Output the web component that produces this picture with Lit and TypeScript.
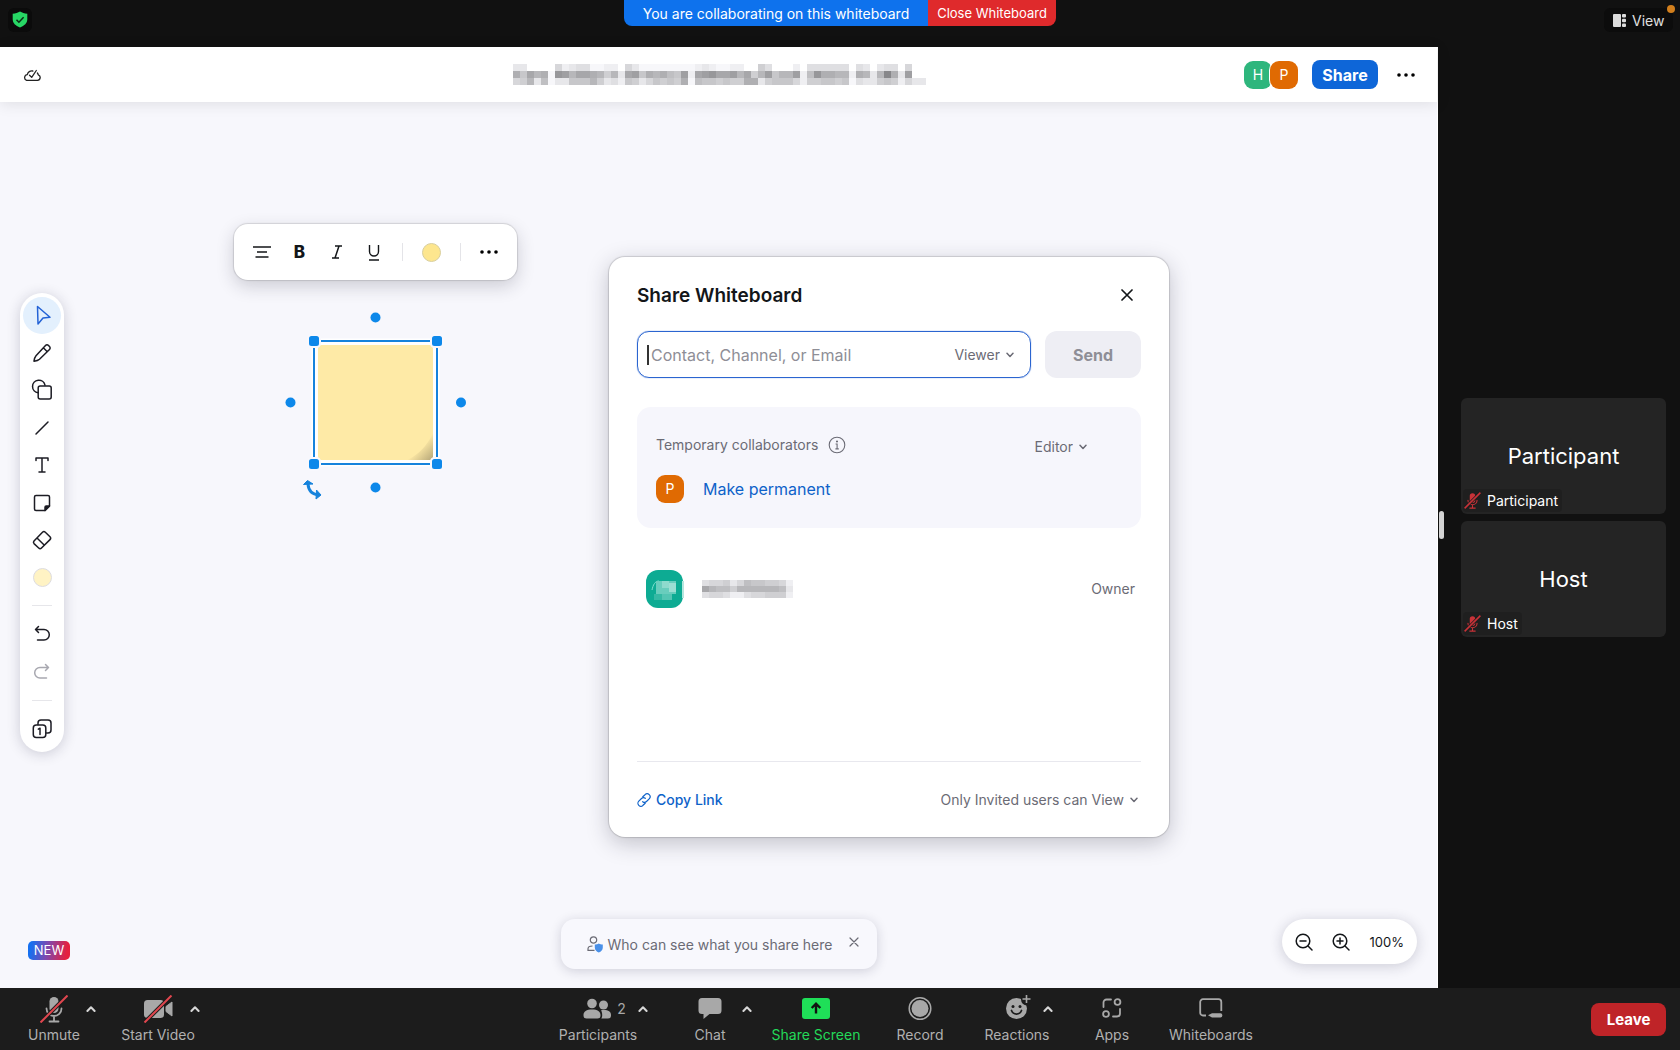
import { LitElement, html, css, svg } from "lit";
import { customElement } from "lit/decorators.js";

const chevronDown = html`<svg class="chev" width="8" height="6" viewBox="0 0 8 6" aria-hidden="true"><path d="M1 1.2 4 4.4 7 1.2" fill="none" stroke="currentColor" stroke-width="1.5" stroke-linecap="round" stroke-linejoin="round"/></svg>`;

const chevronUp = html`<svg width="10" height="8" viewBox="0 0 10 8" aria-hidden="true"><path d="M1.4 6 5 2.2 8.6 6" fill="none" stroke="#d6d6d6" stroke-width="2" stroke-linecap="round" stroke-linejoin="round"/></svg>`;

const dots = html`<svg width="20" height="6" viewBox="0 0 20 6" aria-hidden="true"><circle cx="3" cy="3" r="1.8"/><circle cx="10" cy="3" r="1.8"/><circle cx="17" cy="3" r="1.8"/></svg>`;

const strokeIcon = (body: unknown) => html`<svg width="22" height="22" viewBox="0 0 22 22" fill="none" stroke="currentColor" stroke-width="1.5" stroke-linecap="round" stroke-linejoin="round" aria-hidden="true">${body}</svg>`;

/* Pixelated redaction: one hex digit per cell, 0 = white, f = darkest. */
const mosaic = (rows: string[], w: number, h: number) => html`<svg class="mosaic" width=${rows[0].length * w} height=${rows.length * h} shape-rendering="crispEdges" aria-hidden="true">
  ${rows.map((row, y) => [...row].map((d, x) => {
    const level = parseInt(d, 16);
    const c = 255 - level * 8;
    return level ? svg`<rect x=${x * w} y=${y * h} width=${w} height=${h} fill=${`rgb(${c},${c},${Math.min(255, c + 3)})`}/>` : null;
  }))}
</svg>`;

const TITLE = [
  "33000052344112205311111111232112200640002044444404303440500",
  "a7b9a1dc9bba9693bc7a9a87c2bcdbbc9b69c799c28daa992a939fa3c00",
  "5693813377796342" + "76357676a1" + "8776766aa3677752667767143367625" + "33",
];
const NAME = ["4556358776652", "b988699999983", "4554224556662"];

const TOOLS = [
  { name: "Pen", icon: svg`<path d="M3 19.2c.3-2.300 .8-4.200 2-5.500L14.500 3.500a2.100 2.100 0 0 1 3 0l1 1a2.100 2.100 0 0 1 0 3L8.500 17.200c-1.300 1.200-3.200 1.700-5.500 2ZM12.300 5.800l4 4"/>` },
  { name: "Shapes", icon: svg`<path d="M7.200 13.800A6.300 6.300 0 1 1 14 6.200"/><rect x="7.200" y="7" width="13" height="13" rx="2"/>` },
  { name: "Line", icon: svg`<path d="M5 17 17 5"/>` },
  { name: "Text", icon: svg`<path d="M5 6.500V4h12v2.500M11 4v14M8 18h6"/>` },
  { name: "Sticky note", icon: svg`<path d="M3.500 5A1.500 1.500 0 0 1 5 3.500h12A1.500 1.500 0 0 1 18.500 5v9L14 18.500H5A1.500 1.500 0 0 1 3.500 17Z"/><path d="M14 18.500V15.200A1.200 1.200 0 0 1 15.200 14H18.500Z" fill="currentColor"/>` },
  { name: "Eraser", icon: svg`<path d="M3 12 11.500 3.200a2 2 0 0 1 2.800 0l4.700 4.600a2 2 0 0 1 0 2.800L10.500 19a2 2 0 0 1-2.800 0L3 14.600a2 2 0 0 1 0-2.600ZM6 9l7.400 7.200"/>` },
];

const slash = (x1: number, y1: number, x2: number, y2: number) => svg`<path d="M${x1} ${y1}L${x2} ${y2}" stroke="#1c1c1c" stroke-width="4"/><path d="M${x1} ${y1}L${x2} ${y2}" stroke="#e0464f" stroke-width="2"/>`;

const micBody = svg`<rect x="9.500" y="2" width="9" height="16" rx="4.500" fill="currentColor"/><path d="M6.500 13.500a7.500 7.500 0 0 0 15 0M14 21v4.500M9.500 26.500h9" fill="none" stroke="currentColor" stroke-width="1.800" stroke-linecap="round"/>`;

const ICONS: Record<string, unknown> = {
  mic: html`<svg width="28" height="28" viewBox="0 0 28 28" aria-hidden="true">${micBody}${slash(0.5, 27.5, 27.5, 0.5)}</svg>`,
  video: html`<svg width="30" height="28" viewBox="0 0 30 28" aria-hidden="true"><rect x="1" y="5" width="20" height="18" rx="3.500" fill="currentColor"/><path d="M23 11.500 29 7v14l-6-4.500Z" fill="currentColor" stroke="currentColor" stroke-linejoin="round"/>${slash(1.5, 27.5, 28.5, 0.5)}</svg>`,
  people: html`<svg width="28" height="28" viewBox="0 0 28 28" fill="currentColor" aria-hidden="true"><circle cx="9" cy="8.500" r="4.800"/><path d="M.5 20C.5 16.500 3.500 14.500 9 14.500s8.500 2 8.500 5.500V20.500A3 3 0 0 1 14.500 23.500h-11A3 3 0 0 1 .5 20.500Z"/><circle cx="20.500" cy="10" r="4.500"/><path d="M18 15.300c1-.3 1.800-.3 2.600-.3 5 0 7.400 1.800 7.400 5V20.500a3 3 0 0 1-3 3h-6.700c.6-.8.9-1.900.9-3v-.6c0-1.800-.4-3.200-1.200-4.600Z"/></svg>`,
  chat: html`<svg width="24" height="28" viewBox="0 0 24 28" aria-hidden="true"><path d="M4 3h16a3.500 3.500 0 0 1 3.500 3.500v9A3.500 3.500 0 0 1 20 19h-8.500L5.500 24v-5H4A3.500 3.500 0 0 1 .5 15.500v-9A3.500 3.500 0 0 1 4 3Z" fill="currentColor"/></svg>`,
  screen: html`<svg width="28" height="28" viewBox="0 0 28 28" aria-hidden="true"><rect y="3" width="28" height="21" rx="3" fill="#1fdf58"/><path d="M14 18.500v-9M9.700 13 14 8.700l4.300 4.300" fill="none" stroke="#111" stroke-width="2.400"/></svg>`,
  record: html`<svg width="24" height="28" viewBox="0 0 24 28" aria-hidden="true"><circle cx="12" cy="13.500" r="10.800" fill="none" stroke="currentColor" stroke-width="1.500"/><circle cx="12" cy="13.500" r="8.500" fill="currentColor"/></svg>`,
  smile: html`<svg width="28" height="28" viewBox="0 0 28 28" aria-hidden="true"><circle cx="13.500" cy="13.500" r="10.500" fill="currentColor"/><circle cx="24" cy="4.500" r="6" fill="#1c1c1c"/><path d="M23.500 0v8M19.500 4h8" stroke="currentColor" stroke-width="1.600"/><circle cx="10" cy="11.500" r="1.500" fill="#1c1c1c"/><circle cx="17" cy="11.500" r="1.500" fill="#1c1c1c"/><path d="M8.500 15.500a5.300 5.300 0 0 0 10 0" fill="none" stroke="#1c1c1c" stroke-width="1.700" stroke-linecap="round"/></svg>`,
  apps: html`<svg width="22" height="28" viewBox="0 0 22 28" fill="none" stroke="currentColor" stroke-width="1.800" stroke-linecap="round" aria-hidden="true"><path d="M2.500 12V7.500A3 3 0 0 1 5.500 4.500H10M19 14v4.500a3 3 0 0 1-3 3h-4"/><circle cx="16.500" cy="7" r="2.900"/><circle cx="5" cy="19" r="2.900"/></svg>`,
  board: html`<svg width="24" height="28" viewBox="0 0 24 28" fill="none" stroke="currentColor" stroke-width="1.800" aria-hidden="true"><path d="M7 20.500H4A2.800 2.800 0 0 1 1.200 17.700V7A2.800 2.800 0 0 1 4 4.200H19.500A2.800 2.800 0 0 1 22.300 7v9"/><path d="M9 20.300l4-2h8.500a1.800 1.800 0 0 1 1.800 1.800v.6a1.800 1.800 0 0 1-1.800 1.800H13Z" fill="currentColor" stroke="none"/></svg>`,
};

interface Control { icon: string; label: string; caret?: boolean; count?: number; cls?: string; }

const LEFT_CONTROLS: Control[] = [
  { icon: "mic", label: "Unmute", caret: true },
  { icon: "video", label: "Start Video", caret: true },
];
const CENTER_CONTROLS: Control[] = [
  { icon: "people", label: "Participants", caret: true, count: 2, cls: "wide" },
  { icon: "chat", label: "Chat", caret: true },
  { icon: "screen", label: "Share Screen", cls: "wide green" },
  { icon: "record", label: "Record" },
  { icon: "smile", label: "Reactions", caret: true, cls: "narrow" },
  { icon: "apps", label: "Apps" },
  { icon: "board", label: "Whiteboards", cls: "wide" },
];

const FONT = css`
  * { box-sizing: border-box; }
  button, input, select { font: inherit; color: inherit; background: none; border: 0; padding: 0; margin: 0; }
  button, select { cursor: pointer; }
  svg { display: block; flex: none; }
`;

@customElement("meeting-controls")
export class MeetingControls extends LitElement {
  static styles = [FONT, css`
    :host { display: flex; justify-content: space-between; background: #1c1c1c; color: #b0b0b0; padding: 7px 14px 0 16px; height: 62px; }
    .left { display: grid; grid-template-columns: 104px 98px; }
    .center { display: grid; grid-template-columns: 120px 100px 110px 103px 89px 91px auto; }
    .control { display: flex; align-items: flex-start; }
    .main { display: flex; flex-direction: column; align-items: center; gap: 2px; width: 76px; font-size: 14px; line-height: 20px; white-space: nowrap; }
    .wide .main { width: 92px; }
    .narrow .main { width: 64px; }
    .green .main { color: #23d959; width: 88px; }
    .icon { display: flex; align-items: center; gap: 6px; color: #a8a8a8; }
    .counted { padding-left: 13px; }
    .caret { display: grid; place-items: center; width: 16px; height: 28px; margin-left: -9px; }
    .leave { align-self: flex-start; margin-top: 8px; width: 75px; height: 33px; border-radius: 8px; background: #bf2428; color: #fff; font-weight: 700; font-size: 15px; }
  `];

  private control(c: Control) {
    return html`<div class="control ${c.cls ?? ""}">
      <button class="main"><span class="icon ${c.count ? "counted" : ""}">${ICONS[c.icon]}${c.count ?? ""}</span><span>${c.label}</span></button>
      ${c.caret ? html`<button class="caret" aria-label="${c.label} options">${chevronUp}</button>` : null}
    </div>`;
  }

  render() {
    return html`
      <div class="left">${LEFT_CONTROLS.map((c) => this.control(c))}</div>
      <div class="center">${CENTER_CONTROLS.map((c) => this.control(c))}</div>
      <button class="leave">Leave</button>`;
  }
}

@customElement("share-dialog")
export class ShareDialog extends LitElement {
  static styles = [FONT, css`
    :host { display: flex; flex-direction: column; width: 560px; height: 580px; padding: 28px; background: #fff; border-radius: 16px; box-shadow: 0 0 1px 1px rgba(0,0,0,.14), 0 6px 22px rgba(30,30,50,.25); color: #6b6b75; font-size: 14px; line-height: 20px; }
    .head { display: flex; justify-content: space-between; align-items: center; height: 22px; }
    h2 { margin: 0; font-size: 19px; line-height: 22px; color: #131619; font-weight: 600; }
    .close { color: #131619; padding: 0 8px 3px; }
    .invite { display: flex; gap: 14px; margin-top: 24px; height: 47px; }
    .field { flex: 1; display: flex; align-items: center; border: 1px solid #2b65d0; border-radius: 12px; padding: 0 16px 0 9px; box-shadow: 0 0 1px #2b65d0; min-width: 0; }
    .cursor { width: 2px; height: 20px; background: #333; flex: none; }
    input { flex: 1; min-width: 0; font-size: 16px; outline: none; padding: 0 2px; color: #131619; }
    input::placeholder { color: #8e8e96; opacity: 1; }
    .pick { display: flex; align-items: center; gap: 6px; }
    select { appearance: none; field-sizing: content; outline: none; }
    .send { width: 96px; border-radius: 12px; background: #eeeef4; color: #8e8e96; font-size: 16px; font-weight: 700; }
    .temp { display: flex; flex-direction: column; gap: 18px; margin-top: 29px; padding: 26px 54px 25px 19px; border-radius: 14px; background: #f6f6fc; }
    .temp .pick { padding-top: 4px; }
    .row { display: flex; align-items: center; }
    .info { margin-left: 10px; }
    .grow { flex: 1; }
    .avatar { display: grid; place-items: center; width: 28px; height: 28px; border-radius: 9px; background: #e06a02; color: #fff; }
    .perm { margin-left: 19px; font-size: 16px; color: #0e62c9; }
    .owner { margin-top: 42px; padding: 0 6px 0 9px; }
    .face { width: 38px; height: 38px; margin-right: 18px; }
    .foot { margin-top: auto; border-top: 1px solid #e8e8ee; padding: 28px 3px 0 0; height: 76px; margin-bottom: -28px; justify-content: space-between; align-items: flex-start; }
    a { display: flex; align-items: center; gap: 5px; color: #0e62c9; text-decoration: none; font-weight: 500; }
  `];

  render() {
    return html`
      <div class="head"><h2>Share Whiteboard</h2>
        <button class="close" aria-label="Close"><svg width="12" height="12" viewBox="0 0 12 12" aria-hidden="true"><path d="M1 1l10 10M11 1 1 11" stroke="currentColor" stroke-width="1.700" stroke-linecap="round"/></svg></button></div>
      <div class="invite">
        <div class="field"><span class="cursor"></span>
          <input type="text" placeholder="Contact, Channel, or Email" aria-label="Contact, Channel, or Email">
          <label class="pick"><select aria-label="Invite role"><option>Viewer</option><option>Editor</option></select>${chevronDown}</label></div>
        <button class="send">Send</button>
      </div>
      <section class="temp">
        <div class="row"><span>Temporary collaborators</span>
          <svg class="info" width="18" height="18" viewBox="0 0 18 18" fill="none" stroke="currentColor" stroke-width="1.100" aria-hidden="true"><circle cx="9" cy="9" r="7.800"/><path d="M7.600 8H9.100v4.800M7.400 12.900h3.400"/><circle cx="9" cy="5.500" r=".5" fill="currentColor"/></svg>
          <span class="grow"></span>
          <label class="pick"><select aria-label="Collaborator role"><option>Editor</option><option>Viewer</option></select>${chevronDown}</label></div>
        <div class="row"><span class="avatar">P</span><button class="perm">Make permanent</button></div>
      </section>
      <div class="row owner">
        <svg class="face" viewBox="0 0 38 38" aria-hidden="true"><rect width="37" height="38" rx="12" fill="#0dab93"/><path d="M6 20c1-5 3-9 7-9" stroke="#7fe0d0" fill="none"/><g shape-rendering="crispEdges"><rect x="10" y="11" width="20" height="13" fill="#69cdbd"/><rect x="16" y="11" width="7" height="7" fill="#8edacd"/><rect x="23" y="13" width="7" height="9" fill="#9cded3"/><rect x="8" y="24" width="8" height="6" fill="#35b9a4"/><rect x="16" y="24" width="10" height="6" fill="#54c5b3"/><rect x="36" y="11" width="2" height="17" fill="#b5e6de"/></g></svg>
        ${mosaic(NAME, 7, 6)}<span class="grow"></span><span>Owner</span></div>
      <div class="row foot">
        <a href="#copy"><svg width="14" height="14" viewBox="0 0 14 14" fill="none" stroke="currentColor" stroke-width="1.200" stroke-linecap="round" aria-hidden="true"><path d="M5.800 3.800 8 1.700a2.900 2.900 0 0 1 4.200 4.200L9.500 8.500A2.900 2.900 0 0 1 5.700 8.700"/><path d="M8.200 10.200 6 12.300A2.900 2.900 0 0 1 1.800 8.100L4.500 5.500A2.900 2.900 0 0 1 8.300 5.300"/></svg>Copy Link</a>
        <label class="pick"><select aria-label="Link access"><option>Only Invited users can View</option></select>${chevronDown}</label>
      </div>`;
  }
}

@customElement("app-root")
export class AppRoot extends LitElement {
  static styles = [FONT, css`
    :host { display: grid; grid-template: 47px minmax(0, 1fr) auto / minmax(0, 1fr) 242px; min-height: 100vh; background: #111; font-family: Inter, "Liberation Sans", sans-serif; color: #131619; }
    .top { grid-column: 1 / -1; display: grid; grid-template-columns: 1fr auto 1fr; align-items: start; }
    .badge { justify-self: start; margin: 8px; padding: 3px 4px 4px; border-radius: 6px; background: #0b0b0b; }
    .banner { display: flex; height: 26px; border-radius: 0 0 8px 8px; overflow: hidden; color: #fff; }
    .msg { background: #0e72ed; width: 304px; font-size: 14px; line-height: 27px; text-align: center; }
    .end { background: #df2a2c; width: 128px; font-size: 13px; line-height: 26px; }
    .view { justify-self: end; position: relative; display: flex; align-items: center; gap: 6px; margin: 8px 7px; width: 69px; height: 24px; padding-left: 9px; border-radius: 6px; background: #0c0c0c; color: #e0e0e0; font-size: 14px; }
    .alert { position: absolute; right: -2px; top: -3px; width: 8px; height: 8px; border-radius: 50%; background: #d27f1d; }
    .board { display: flex; flex-direction: column; background: #f7f7fc; border-right: 1px solid #fff; min-width: 0; }
    .header { display: grid; grid-template-columns: 1fr auto 1fr; align-items: center; height: 55px; padding: 0 21px 0 23px; background: #fff; box-shadow: 0 2px 14px rgba(0,0,0,.1); z-index: 1; }
    .actions { justify-self: end; display: flex; align-items: center; }
    .avatar { display: grid; place-items: center; width: 28px; height: 28px; border-radius: 9px; background: #2eb67d; color: #fff; font-size: 14px; }
    .second { background: #e06a02; margin-left: -2px; box-shadow: 0 0 0 1px #fff; }
    .share { width: 66px; height: 29px; margin: 0 18px 0 14px; border-radius: 8px; background: #0e66d8; color: #fff; font-size: 16px; font-weight: 700; }
    .canvas { position: relative; flex: 1; min-height: 760px; }
    .tools { position: absolute; left: 20px; top: 191px; width: 44px; padding: 4px 0; border-radius: 22px; background: #fff; box-shadow: 0 2px 14px rgba(30,30,60,.2); display: flex; flex-direction: column; align-items: center; }
    .group { display: flex; flex-direction: column; height: 299px; }
    .tool { flex: 1; display: grid; place-items: center; width: 38px; min-height: 38px; color: #1c1c24; }
    .group .tool { min-height: 0; }
    .active { border-radius: 50%; background: #e3f0fd; color: #2463d6; }
    .dim { color: #a8a8b0; }
    .rule { width: 20px; height: 1px; margin: 9px 0; background: #e6e6ea; }
    .swatch { width: 19px; height: 19px; border-radius: 50%; background: #fff3c4; border: 1px solid #dddce0; }
    .gold { background: #fde68e; border-color: #d8cf9f; }
    .format { position: absolute; left: 234px; top: 122px; display: grid; grid-template-columns: 38px 37px 37px 37px 21px 37px 20px 38px; justify-items: center; align-items: center; width: 283px; height: 56px; padding-left: 9px; border-radius: 14px; background: #fff; box-shadow: 0 0 1px 1px rgba(0,0,0,.12), 0 6px 18px rgba(30,30,50,.2); font-size: 18px; }
    .bar { width: 1px; height: 18px; background: #e4e4e8; }
    .bold { font-weight: 800; font-size: 17px; }
    .selection { position: absolute; left: 284px; top: 209px; }
    .toast { position: absolute; left: 0; right: 0; bottom: 19px; margin: 0 auto; width: 316px; height: 50px; display: flex; align-items: center; gap: 5px; padding: 0 18px 0 26px; border-radius: 14px; background: #f8f8fd; box-shadow: 0 2px 12px rgba(30,30,60,.18); color: #6b6b75; font-size: 14px; }
    .dismiss { margin-left: auto; padding-bottom: 4px; }
    .zoom { position: absolute; right: 20px; bottom: 24px; display: flex; align-items: center; gap: 15px; height: 45px; padding: 0 13px 0 11px; border-radius: 23px; background: #fff; box-shadow: 0 2px 14px rgba(30,30,60,.2); font-size: 13px; }
    .pct { margin-left: 3px; }
    .new { position: absolute; left: 28px; bottom: 28px; width: 42px; height: 19px; border-radius: 5px; background: linear-gradient(100deg, #1670f0 8%, #7d49b0 45%, #e5203f 90%); color: #fff; font-size: 13px; line-height: 19px; text-align: center; }
    share-dialog { position: absolute; left: 609px; top: 155px; z-index: 2; }
    .side { display: grid; grid-template-columns: 5px 1fr; align-items: center; gap: 17px; padding: 0 14px 0 1px; }
    .grip { width: 5px; height: 28px; margin-top: 15px; border-radius: 3px; background: #d4d4d4; }
    .tiles { display: flex; flex-direction: column; gap: 7px; }
    .tile { display: grid; height: 116px; border-radius: 6px; background: #242424; color: #fff; position: relative; place-items: center; font-size: 22px; }
    .tag { position: absolute; left: 2px; bottom: 2px; display: flex; align-items: center; gap: 6px; height: 23px; padding: 0 4px 0 1px; border-radius: 4px; background: #1f1f1f; font-size: 14px; }
    meeting-controls { grid-column: 1 / -1; }
  `];

  private tile(name: string) {
    return html`<div class="tile"><span>${name}</span><span class="tag">
      <svg width="17" height="17" viewBox="0 0 28 28" color="#c93238" aria-hidden="true">${micBody}<path d="M1 27 27 1" stroke="#1f1f1f" stroke-width="5"/><path d="M1 27 27 1" stroke="#c93238" stroke-width="2.500"/></svg>${name}</span></div>`;
  }

  render() {
    return html`
      <header class="top">
        <span class="badge"><svg width="16" height="17" viewBox="0 0 16 17" role="img" aria-label="Encrypted"><path d="M8 .5c2 1.300 4.500 2 7.300 2.200v5.600c0 3.800-2.800 6.500-7.300 8.200C3.500 14.800.7 12.100.7 8.300V2.700C3.500 2.500 6 1.800 8 .5Z" fill="#27d765"/><path d="m4.500 8.800 2.400 2.400 4.700-4.900" fill="none" stroke="#0c2a15" stroke-width="1.500"/></svg></span>
        <div class="banner"><span class="msg">You are collaborating on this whiteboard</span><button class="end">Close Whiteboard</button></div>
        <button class="view"><svg width="13" height="13" viewBox="0 0 13 13" fill="#dcdcdc" aria-hidden="true"><rect width="8" height="13" rx="1"/><rect x="9" width="4" height="3.600" rx="1"/><rect x="9" y="4.700" width="4" height="3.600" rx="1"/><rect x="9" y="9.400" width="4" height="3.600" rx="1"/></svg>View<span class="alert"></span></button>
      </header>
      <main class="board">
        <div class="header">
          <svg width="18" height="14" viewBox="0 0 18 14" fill="none" stroke="#222" stroke-width="1.300" stroke-linecap="round" stroke-linejoin="round" aria-hidden="true"><path d="M9.800 3A4.600 4.600 0 0 0 4.300 6.600 3 3 0 0 0 3.600 12.400h10.900a2.900 2.900 0 0 0 .8-5.600c-.2-.8-.5-1.300-.9-1.800"/><path d="m6.500 7.300 2.200 2L13.300 2.500"/></svg>
          ${mosaic(TITLE, 7, 7)}
          <div class="actions"><span class="avatar">H</span><span class="avatar second">P</span><button class="share">Share</button><button aria-label="More">${dots}</button></div>
        </div>
        <div class="canvas">
          <svg class="selection" width="184" height="192" viewBox="0 0 184 192" role="img" aria-label="Selected sticky note">
            <defs><linearGradient id="fold" x1="0.500" y1="0.500" x2="1" y2="1"><stop offset="0" stop-color="#fee9a5"/><stop offset="1" stop-color="#b5a678"/></linearGradient></defs>
            <rect x="30" y="30" width="123" height="123" fill="#fff" stroke="#fff" stroke-width="5"/>
            <rect x="34" y="34" width="115" height="115" fill="#feeaa6"/>
            <path d="M149 122v27h-26c11-5 20-14 26-27Z" fill="url(#fold)"/>
            <rect x="30" y="30" width="123" height="123" fill="none" stroke="#1683dc" stroke-width="2"/>
            ${[[30, 30], [153, 30], [30, 153], [153, 153]].map(([x, y]) => svg`<rect x=${x - 6} y=${y - 6} width="12" height="12" rx="3.500" fill="#0d88ea" stroke="#f8f8fd" stroke-width="2"/>`)}
            ${[[91.5, 6.5], [6.5, 91.5], [177, 91.5], [91.5, 176.5]].map(([x, y]) => svg`<circle cx=${x} cy=${y} r="5" fill="#0d88ea"/>`)}
            <g transform="translate(0 -1)"><path d="M24 174c.5 7 4 10.500 11 11" fill="none" stroke="#1683dc" stroke-width="3"/><path d="M19.500 174.500 23.500 170.500l5.500 3.500ZM32.500 180l4.500 5-5 4Z" fill="#1683dc" stroke="#1683dc" stroke-linejoin="round"/></g>
          </svg>
          <div class="format" role="toolbar" aria-label="Text format">
            <button aria-label="Align"><svg width="18" height="12" viewBox="0 0 18 12" stroke="currentColor" stroke-width="1.500" aria-hidden="true"><path d="M0 1h18M4 6h10M2.500 11h13"/></svg></button>
            <button class="bold">B</button>
            <button aria-label="Italic"><svg width="12" height="14" viewBox="0 0 12 14" fill="none" stroke="currentColor" stroke-width="1.500" aria-hidden="true"><path d="M4 1h7M1 13h7M8 1 4 13"/></svg></button>
            <button aria-label="Underline"><svg width="14" height="17" viewBox="0 0 14 17" fill="none" stroke="currentColor" stroke-width="1.400" aria-hidden="true"><path d="M2.500 1v6.500a4.500 4.500 0 0 0 9 0V1M2 16h10"/></svg></button>
            <span class="bar"></span><button class="swatch gold" aria-label="Note color"></button><span class="bar"></span>
            <button aria-label="More">${dots}</button>
          </div>
          <nav class="tools" aria-label="Drawing tools">
            <div class="group">
              <button class="tool active" aria-label="Select">${strokeIcon(svg`<path d="M6.500 1.500 19 12.200l-7 .8-5 6Z"/>`)}</button>
              ${TOOLS.map((t) => html`<button class="tool" aria-label=${t.name}>${strokeIcon(t.icon)}</button>`)}
              <button class="tool" aria-label="Color"><span class="swatch"></span></button>
            </div>
            <span class="rule"></span>
            <button class="tool" aria-label="Undo">${strokeIcon(svg`<path d="M7.500 3.500 4.500 6.500l3 3M4.500 6.500H13a5.300 5.300 0 0 1 0 10.600H6.500"/>`)}</button>
            <button class="tool dim" aria-label="Redo">${strokeIcon(svg`<path d="m14.500 3.500 3 3-3 3M17.500 6.500H9a5.300 5.300 0 0 0 0 10.600h6.500"/>`)}</button>
            <span class="rule"></span>
            <button class="tool" aria-label="Pages">${strokeIcon(svg`<rect x="2.300" y="7" width="12.500" height="12.500" rx="3"/><path d="M7 6.500V5a3 3 0 0 1 3-3h7a3 3 0 0 1 3 3v7a3 3 0 0 1-3 3h-1.500M7.300 11.200l1.700-1v6.400"/>`)}</button>
          </nav>
          <share-dialog role="dialog" aria-label="Share Whiteboard"></share-dialog>
          <span class="new">NEW</span>
          <div class="toast"><svg width="16" height="17" viewBox="0 0 16 17" aria-hidden="true"><circle cx="6.500" cy="4" r="3.200" fill="none" stroke="#6b6b75" stroke-width="1.200"/><path d="M7.500 14.300H1v-1.500C1 11 3 10 5.500 10" fill="none" stroke="#6b6b75" stroke-width="1.200"/><path d="M11.800 7.500c1.200.8 2.400 1 4 1.100v3c0 2.500-1.600 4-4 5-2.400-1-4-2.500-4-5v-3c1.600-.1 2.800-.3 4-1.100Z" fill="#4a90e8"/></svg>
            <span>Who can see what you share here</span>
            <button class="dismiss" aria-label="Dismiss"><svg width="10" height="10" viewBox="0 0 10 10" aria-hidden="true"><path d="m1 1 8 8M9 1 1 9" stroke="#6b6b75" stroke-width="1.200" stroke-linecap="round"/></svg></button></div>
          <div class="zoom">
            <button aria-label="Zoom out">${strokeIcon(svg`<circle cx="10" cy="10" r="6.800"/><path d="m15 15 4 4M7 10h6"/>`)}</button>
            <button aria-label="Zoom in">${strokeIcon(svg`<circle cx="10" cy="10" r="6.800"/><path d="m15 15 4 4M7 10h6M10 7v6"/>`)}</button>
            <span class="pct">100%</span>
          </div>
        </div>
      </main>
      <aside class="side"><span class="grip"></span><div class="tiles">${this.tile("Participant")}${this.tile("Host")}</div></aside>
      <meeting-controls></meeting-controls>`;
  }
}
